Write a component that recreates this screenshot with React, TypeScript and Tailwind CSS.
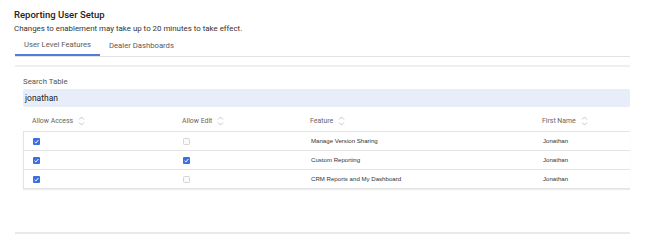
import React from "react";

const roboto = { fontFamily: "Roboto, 'Noto Sans', sans-serif" };

function SortIcon() {
  return (
    <svg width="7" height="10" viewBox="0 0 7 10" className="ml-[5px]" fill="none">
      <path d="M1 3.5 L3.5 1 L6 3.5" stroke="#b8b8b8" strokeWidth="0.8" />
      <path d="M1 6.5 L3.5 9 L6 6.5" stroke="#b8b8b8" strokeWidth="0.8" />
    </svg>
  );
}

function Box({ checked }: { checked: boolean }) {
  if (checked) {
    return (
      <div className="w-[7px] h-[7px] rounded-[1px] bg-[#3b6fe0] flex items-center justify-center">
        <svg width="7" height="7" viewBox="0 0 7 7" fill="none">
          <path d="M1.6 3.8 L2.9 5 L5.4 2" stroke="white" strokeWidth="1" />
        </svg>
      </div>
    );
  }
  return <div className="w-[7px] h-[7px] rounded-[1.5px] border border-[#d4d4d4] bg-[#fafafa]" />;
}

const rows = [
  { access: true, edit: false, feature: "Manage Version Sharing", name: "Jonathan" },
  { access: true, edit: true, feature: "Custom Reporting", name: "Jonathan" },
  { access: true, edit: false, feature: "CRM Reports and My Dashboard", name: "Jonathan" },
];

const cols = "grid grid-cols-[150px_128px_232px_1fr]";

export default function App() {
  return (
    <div className="w-[670px] h-[250px] bg-white overflow-hidden" style={roboto}>
      <div className="ml-[15px] w-[615px] pt-[9px]">
        <div>
          <div className="-ml-[1px] text-[9.5px] leading-[12px] font-medium text-[#222]">Reporting User Setup</div>
          <div className="-ml-[1px] mt-[3px] text-[7.9px] leading-[10px] text-[#333]">
            Changes to enablement may take up to 20 minutes to take effect.
          </div>
        </div>
        <div className="flex mt-[1px] border-b border-[#e2e2e2]">
          <div className="w-[85px] h-[21px] -mb-px border-b-2 border-[#4f7fd9] flex items-center justify-center text-[7.7px] text-[#5a5a5a]">
            User Level Features
          </div>
          <div className="h-[21px] pl-[9px] flex items-center text-[7.7px] text-[#5a5a5a]">Dealer Dashboards</div>
        </div>
        <div className="mt-[8px] border-t-2 border-[#efefef] pl-[8px]">
          <div className="mt-[10px] text-[7.8px] leading-[10px] text-[#555]">Search Table</div>
          <div className="mt-[2px] h-[18px] bg-[#e7eefa] rounded-[2px] flex items-center pl-[2px] text-[8.5px] text-[#222]">
            jonathan
          </div>
          <div className={`${cols} mt-[5px] h-[19px] items-center text-[6.9px] text-[#666]`}>
            <div className="pl-[9px] flex items-center">Allow Access<SortIcon /></div>
            <div className="pl-[9px] flex items-center">Allow Edit<SortIcon /></div>
            <div className="pl-[9px] flex items-center">Feature<SortIcon /></div>
            <div className="pl-[9px] flex items-center">First Name<SortIcon /></div>
          </div>
          <div className="border-l border-t border-[#e4e4e4] shadow-[0_1px_1px_rgba(0,0,0,0.08)]">
            {rows.map((r, i) => (
              <div
                key={i}
                className={`${cols} h-[19px] items-center border-b border-[#e4e4e4] text-[6.1px] text-[#333]`}
                style={{ fontFamily: "'Liberation Sans', Arial, sans-serif" }}
              >
                <div className="pl-[9px]"><Box checked={r.access} /></div>
                <div className="pl-[9px]"><Box checked={r.edit} /></div>
                <div className="pl-[9px]">{r.feature}</div>
                <div className="pl-[9px]">{r.name}</div>
              </div>
            ))}
          </div>
        </div>
        <div className="mt-[43px] border-t-2 border-[#e9e9e9]" />
      </div>
    </div>
  );
}
